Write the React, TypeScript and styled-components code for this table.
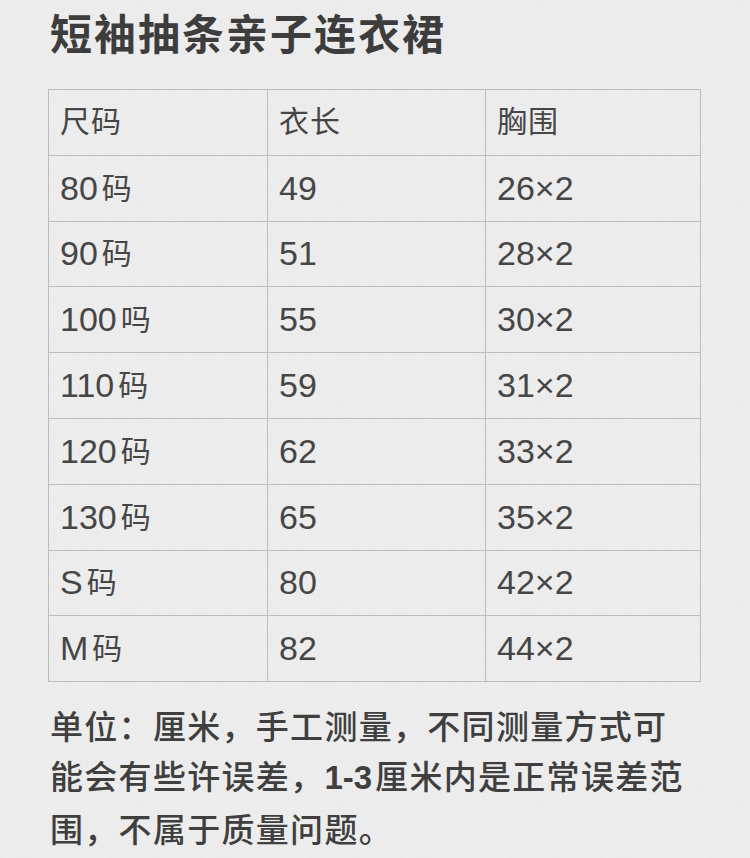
import React from "react";
import styled, { createGlobalStyle } from "styled-components";

const noise =
  "url(\"data:image/svg+xml;utf8,<svg xmlns='http://www.w3.org/2000/svg' width='200' height='200'><filter id='n'><feTurbulence type='fractalNoise' baseFrequency='0.9' numOctaves='3' stitchTiles='stitch'/><feColorMatrix values='0 0 0 0 0.4 0 0 0 0 0.4 0 0 0 0 0.4 0 0 0 0.09 0'/></filter><rect width='100%' height='100%' filter='url(%23n)'/></svg>\")";

const GlobalStyle = createGlobalStyle`
  html, body {
    margin: 0;
    padding: 0;
    background-color: #efefef;
    background-image: ${noise};
  }
  body {
    font-family: "Liberation Sans", "Noto Sans CJK SC", sans-serif;
    color: #444;
  }
`;

const Page = styled.div`
  width: 750px;
  height: 858px;
  box-sizing: border-box;
  padding: 4px 49px 0 48px;
  display: flex;
  flex-direction: column;
  overflow: hidden;
`;

const Title = styled.h1`
  margin: 0 0 29px 2px;
  font-family: "Noto Sans CJK SC", sans-serif;
  font-size: 42px;
  line-height: 56px;
  font-weight: 700;
  letter-spacing: 2px;
  color: #3d3d3d;
`;

const Grid = styled.div`
  display: grid;
  grid-template-columns: 219px 218px 215px;
  border-top: 1px solid #bdbdbd;
  border-left: 1px solid #bdbdbd;
  width: 653px;
  box-sizing: border-box;
`;

const Cell = styled.div<{ $head?: boolean }>`
  box-sizing: border-box;
  height: 65.8px;
  border-right: 1px solid #bdbdbd;
  border-bottom: 1px solid #bdbdbd;
  padding-left: 11px;
  padding-bottom: ${(p) => (p.$head ? "6px" : "0")};
  display: flex;
  align-items: center;
  font-size: 34px;
  color: #464646;
`;

const Unit = styled.span`
  font-family: "Noto Sans CJK SC", sans-serif;
  font-size: 30px;
  margin-left: 4px;
  margin-bottom: 5px;
`;

const HeadText = styled.span`
  font-family: "Noto Sans CJK SC", sans-serif;
  font-size: 30px;
  letter-spacing: 1px;
`;

const Note = styled.p`
  margin: 18px 0 0 2px;
  font-family: "Noto Sans CJK SC", sans-serif;
  font-size: 33px;
  line-height: 50px;
  font-weight: 500;
  letter-spacing: 1.3px;
  color: #3f3f3f;
`;

const NoteLine = styled.span`
  display: block;
  white-space: nowrap;
`;

const Num = styled.span`
  font-family: "Liberation Sans", sans-serif;
  font-weight: 700;
  letter-spacing: 0;
  margin-right: 3px;
`;

const rows: [string, string, string, string][] = [
  ["80", "码", "49", "26×2"],
  ["90", "码", "51", "28×2"],
  ["100", "吗", "55", "30×2"],
  ["110", "码", "59", "31×2"],
  ["120", "码", "62", "33×2"],
  ["130", "码", "65", "35×2"],
  ["S", "码", "80", "42×2"],
  ["M", "码", "82", "44×2"],
];

export default function App() {
  return (
    <Page>
      <GlobalStyle />
      <Title>短袖抽条亲子连衣裙</Title>
      <Grid>
        <Cell $head><HeadText>尺码</HeadText></Cell>
        <Cell $head><HeadText>衣长</HeadText></Cell>
        <Cell $head><HeadText>胸围</HeadText></Cell>
        {rows.map(([size, unit, len, chest]) => (
          <React.Fragment key={size}>
            <Cell>
              {size}
              <Unit>{unit}</Unit>
            </Cell>
            <Cell>{len}</Cell>
            <Cell>{chest}</Cell>
          </React.Fragment>
        ))}
      </Grid>
      <Note>
        <NoteLine>单位：厘米，手工测量，不同测量方式可</NoteLine>
        <NoteLine>
          能会有些许误差，<Num>1-3</Num>厘米内是正常误差范
        </NoteLine>
        <NoteLine>围，不属于质量问题。</NoteLine>
      </Note>
    </Page>
  );
}
